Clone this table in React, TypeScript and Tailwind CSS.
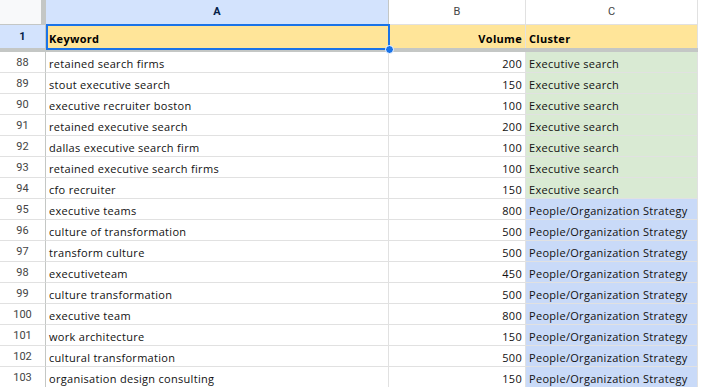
import React from "react";

type Row = [number, string, number, string];

const rows: Row[] = [
  [88, "retained search firms", 200, "Executive search"],
  [89, "stout executive search", 150, "Executive search"],
  [90, "executive recruiter boston", 100, "Executive search"],
  [91, "retained executive search", 200, "Executive search"],
  [92, "dallas executive search firm", 100, "Executive search"],
  [93, "retained executive search firms", 100, "Executive search"],
  [94, "cfo recruiter", 150, "Executive search"],
  [95, "executive teams", 800, "People/Organization Strategy"],
  [96, "culture of transformation", 500, "People/Organization Strategy"],
  [97, "transform culture", 500, "People/Organization Strategy"],
  [98, "executiveteam", 450, "People/Organization Strategy"],
  [99, "culture transformation", 500, "People/Organization Strategy"],
  [100, "executive team", 800, "People/Organization Strategy"],
  [101, "work architecture", 150, "People/Organization Strategy"],
  [102, "cultural transformation", 500, "People/Organization Strategy"],
  [103, "organisation design consulting", 150, "People/Organization Strategy"],
];

const cellFont = { fontFamily: '"Open Sans", "Liberation Sans", sans-serif' };
const hdrFont = { fontFamily: 'Roboto, "Liberation Sans", sans-serif' };

export default function App() {
  return (
    <div className="w-[701px] h-[387px] overflow-hidden bg-white relative">
      {/* column header row */}
      <div className="flex h-[25px] text-[11px] text-[#444]" style={hdrFont}>
        <div className="w-[46px] h-[25px] flex bg-[#f8f9fa] border-b border-[#c4c7c5]">
          <div className="w-[41px]" />
          <div className="w-[5px] bg-[#c4c7c5]" />
        </div>
        <div className="w-[343px] bg-[#d3e3fd] border-r border-b border-[#c4c7c5] flex items-center justify-center font-bold text-[#041e49]">
          A
        </div>
        <div className="w-[137px] bg-white border-r border-b border-[#e1e1e1] flex items-center justify-center">
          B
        </div>
        <div className="w-[172px] bg-white border-r border-b border-[#e1e1e1] flex items-center justify-center">
          C
        </div>
      </div>

      {/* row 1 */}
      <div className="flex h-[23px] text-[11px] leading-[14px] tracking-[0.3px]">
        <div
          className="w-[46px] bg-[#d3e3fd] border-r border-[#c4c7c5] flex items-center justify-center font-bold text-[#041e49] tracking-normal"
          style={hdrFont}
        >
          1
        </div>
        <div className="w-[343px] bg-[#ffe599] border-r border-[#e1e1e1] flex items-end pl-[3px] pb-[2px] font-bold text-black" style={cellFont}>
          Keyword
        </div>
        <div className="w-[137px] bg-[#ffe599] border-r border-[#e1e1e1] flex items-end justify-end pr-[3px] pb-[2px] font-bold text-black" style={cellFont}>
          Volume
        </div>
        <div className="w-[172px] bg-[#ffe599] border-r border-[#e1e1e1] flex items-end pl-[3px] pb-[2px] font-bold text-black" style={cellFont}>
          Cluster
        </div>
      </div>

      {/* frozen divider */}
      <div className="h-[4px] w-[698px] bg-[#c4c7c5]" />

      {/* data rows */}
      {rows.map(([n, kw, vol, cl]) => {
        const bg = cl === "Executive search" ? "bg-[#d9ead3]" : "bg-[#c9daf8]";
        return (
          <div key={n} className="flex h-[21px] text-[11px] leading-[14px] tracking-[0.3px]">
            <div
              className="w-[46px] bg-white border-r border-b border-[#c4c7c5] border-b-[#e1e1e1] flex items-center justify-center text-[#444] tracking-normal pt-[1px]"
              style={hdrFont}
            >
              {n}
            </div>
            <div className="w-[343px] border-r border-b border-[#e1e1e1] flex items-end pl-[3px] pb-[1px] text-[#111]" style={cellFont}>
              {kw}
            </div>
            <div className="w-[137px] border-r border-b border-[#e1e1e1] flex items-end justify-end pr-[3px] pb-[1px] text-[#111]" style={cellFont}>
              {vol}
            </div>
            <div className={`w-[172px] ${bg} border-r border-b border-[#e1e1e1] flex items-end pl-[3px] pb-[1px] text-[#111] whitespace-nowrap overflow-hidden`} style={cellFont}>
              {cl}
            </div>
          </div>
        );
      })}

      {/* selection border on A1 */}
      <div className="absolute left-[46px] top-[24px] w-[344px] h-[26px] border-2 border-[#1a73e8] pointer-events-none" />
      <div className="absolute left-[385px] top-[45px] w-[9px] h-[9px] rounded-full bg-[#1a73e8] border border-white" />
    </div>
  );
}
